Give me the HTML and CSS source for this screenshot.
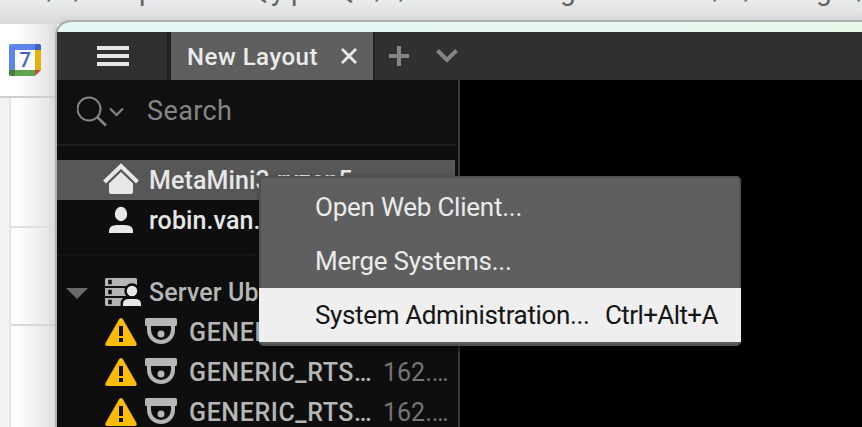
FILE: index.html
```html
<!DOCTYPE html>
<html lang="en">
<head>
<meta charset="utf-8">
<title>New Layout</title>
<link rel="stylesheet" href="styles.css">
</head>
<body>
<svg class="defs" width="0" height="0">
  <symbol id="warning" viewBox="0 0 32 28"><path d="M14.2 1Q16-1 17.8 1L31.5 25Q32.3 28 30 28H2Q-.3 28 .5 25Z" fill="#fdbc05"/><path d="M14 8h4v10h-4zM14 20h4v4h-4z" fill="#0e0e0e"/></symbol>
  <symbol id="camera" viewBox="0 0 32 26"><path d="M1.5 0h29Q32 0 32 1.5V6.500Q32 8 30.500 8H30v4a14 14 0 0 1-28 0V8h-.5Q0 8 0 6.500v-5Q0 0 1.500 0ZM6 8v3.500a10 10.500 0 0 0 20 0V8Z" fill="#b6b6b6" fill-rule="evenodd"/><circle cx="16" cy="16" r="3.500" fill="#b6b6b6"/></symbol>
</svg>
<div class="address"><svg width="862" height="24"><text y="0" x="47 74 139 249 271 291 335 375 399 560 713 744 816 857">//pQypQ//g//g/</text></svg></div>
<div class="page">
  <div class="page-head">
    <svg width="32" height="32" viewBox="0 0 32 32"><path d="M2 0h24v6H6v20H0V2Q0 0 2 0Z" fill="#5b84ec"/><path d="M26 0h4q2 0 2 2v4h-6Z" fill="#3c64c4"/><path d="M26 6h6v20h-6Z" fill="#e4b20c"/><path d="M6 26h20v6H6Z" fill="#60a350"/><path d="M0 26h6v6H2Q0 32 0 30Z" fill="#477d37"/><path d="M26 26h6l-6 6Z" fill="#cf4632"/><path d="M6 6h20v20H6Z" fill="#fbfbfb"/><text class="day" x="10.500" y="23">7</text></svg>
  </div>
  <div class="page-grid"><div class="gutter"></div><div class="slots"><div class="slot first"></div><div class="slot"></div></div></div>
</div>

<div class="window">
  <div class="titlebar"></div>
  <div class="tabs">
    <div class="menu-button"><svg width="32" height="20"><path d="M0 0h32v4H0zM0 8h32v4H0zM0 16h32v4H0z" fill="#e6e6e6"/></svg></div>
    <div class="tab"><span>New Layout</span><svg width="16" height="16"><path d="M1 1l14 14M15 1L1 15" stroke="#ebebeb" stroke-width="2.800"/></svg></div>
    <svg class="add" width="20" height="20"><path d="M8 0h4v8h8v4h-8v8H8v-8H0V8h8z" fill="#858585"/></svg>
    <svg class="more" width="22" height="14"><path d="M1.500 1.500L11 11l9.500-9.500" fill="none" stroke="#858585" stroke-width="4"/></svg>
  </div>
  <div class="main">
    <div class="sidebar">
      <div class="search">
        <svg width="50" height="32"><circle cx="12" cy="13" r="11.500" fill="none" stroke="#858585" stroke-width="2"/><path d="M20 21l9 8.500" stroke="#858585" stroke-width="2.600"/><path d="M33 12.500l6.500 6.500L46 12.500" fill="none" stroke="#858585" stroke-width="2.200"/></svg>
        <span>Search</span>
      </div>
      <div class="tree">
        <div class="row selected">
          <svg width="36" height="32"><path d="M1.500 19L18 3l16.500 16" fill="none" stroke="#e7e7e7" stroke-width="4"/><path d="M18 9l12 11.500V29q0 2-2 2H8q-2 0-2-2v-8.500Z" fill="#e7e7e7"/></svg>
          <span>MetaMini3.ryzen5</span>
        </div>
        <div class="row user">
          <svg width="36" height="28"><ellipse cx="18" cy="8" rx="6.200" ry="7.200" fill="#e7e7e7"/><path d="M6 27v-2q0-6 8-6h8q8 0 8 6v2Z" fill="#e7e7e7"/></svg>
          <span>robin.van.</span>
        </div>
        <div class="divider"></div>
        <div class="row server">
          <svg class="arrow" width="22" height="11"><path d="M0 0h22L11 11z" fill="#696969"/></svg>
          <svg width="36" height="28"><path d="M1 0h30l1 1v7H0V1zM0 10h32v8H0zM0 20h32v8H1l-1-1z" fill="#b6b6b6"/><path d="M4 2.500h2v3H4zM4 12.500h2v3H4zM4 22.500h2v3H4z" stroke="#0e0e0e" stroke-width="1.500"/><g fill="#e7e7e7" stroke="#0e0e0e" stroke-width="5" paint-order="stroke"><circle cx="27" cy="13" r="5.200"/><path d="M18 28v-2q0-5 6-5h6q6 0 6 5v2Z"/></g></svg>
          <span>Server Ub</span>
        </div>
        <div class="row device"><svg width="32" height="28"><use href="#warning"/></svg><svg class="cam" width="32" height="26"><use href="#camera"/></svg><span>GENER</span></div>
        <div class="row device"><svg width="32" height="28"><use href="#warning"/></svg><svg class="cam" width="32" height="26"><use href="#camera"/></svg><span>GENERIC_RTS…</span><small>162.…</small></div>
        <div class="row device"><svg width="32" height="28"><use href="#warning"/></svg><svg class="cam" width="32" height="26"><use href="#camera"/></svg><span>GENERIC_RTS…</span><small>162.…</small></div>
      </div>
    </div>
    <div class="viewer"></div>
  </div>
</div>

<div class="context-menu">
  <div class="item"><span class="open">Open Web Client...</span></div>
  <div class="item"><span class="merge">Merge Systems...</span></div>
  <div class="item active"><span class="admin">System Administration...</span><span class="key">Ctrl+Alt+A</span></div>
</div>
</body>
</html>
```
FILE: styles.css
```css
* { box-sizing: border-box; }
body { margin: 0; width: 862px; height: 427px; overflow: hidden; position: relative; display: flex; flex-direction: column; font: 26px/40px Roboto, sans-serif; background: #fff; }
svg { display: block; flex: none; }
.defs { position: absolute; }
.address { height: 24px; flex: none; background: linear-gradient(#eaecec, #d9dadc); }
.address text { font: 28px Roboto, sans-serif; fill: #606266; }
.page { width: 57px; flex: 1; display: flex; flex-direction: column; background: linear-gradient(90deg, #fff 25%, #f0f0f0 65%, #dedede); }
.page-head { height: 74px; flex: none; border-bottom: 2px solid #cfcfd1; padding: 20px 0 0 9px; }
.day { font: 500 20px Roboto, sans-serif; fill: #3c64c4; }
.page-grid { display: flex; flex: 1; }
.gutter { width: 11px; border-right: 2px solid #e3e4e8; background: #f3f3f3; }
.slots { flex: 1; }
.slot { height: 98px; border-bottom: 2px solid #d6d7dc; }
.slot.first { height: 130px; border-color: #dce0e6; }

.window { position: absolute; left: 55px; top: 20px; width: 815px; height: 415px; display: flex; flex-direction: column; border: 2px solid #afb1b1; border-radius: 15px 0 0 0; overflow: hidden; background: #000; box-shadow: -1px 0 8px rgba(0, 0, 0, .06); }
.titlebar { height: 10px; flex: none; background: linear-gradient(90deg, #e4f7f5 30%, #e9f6ea); }
.tabs { height: 48px; flex: none; display: flex; align-items: center; background: #303030; }
.menu-button { width: 114px; height: 48px; border-right: 4px solid #222; padding: 14px 0 0 40px; }
.tab { width: 204px; height: 48px; display: flex; align-items: center; background: #5f5f5f; border-right: 2px solid #222; color: #ebebeb; font-size: 24px; font-weight: 500; letter-spacing: .5px; line-height: 48px; padding-left: 16px; }
.tab span { width: 154px; white-space: nowrap; padding-top: 1px; }
.add { margin-left: 14px; }
.more { margin-left: 27px; }
.main { flex: 1; display: flex; }
.sidebar { width: 403px; border-right: 2px solid #373737; background: #0e0e0e; padding-right: 3px; }
.search { height: 66px; border-bottom: 2px solid #1e1e1e; background: #101010; display: flex; color: #858585; padding: 11px 0 0 20px; }
.search svg { margin-top: 5px; }
.search span { margin-left: 20px; font-size: 27px; letter-spacing: .4px; }
.tree { padding-top: 14px; color: #b6b6b6; font-weight: 500; }
.row { height: 40px; display: flex; align-items: center; padding-left: 46px; white-space: nowrap; }
.row span { margin: 2px 0 0 10px; font-size: 25px; letter-spacing: .1px; }
.selected { background: #575757; color: #e7e7e7; }
.selected svg { margin-bottom: 2px; }
.user { color: #e7e7e7; }
.user svg { margin-bottom: 1px; }
.divider { height: 32px; padding-top: 14px; }
.divider::before { content: ""; display: block; height: 2px; background: #151515; }
.server { padding-left: 9px; }
.arrow { margin: 2px 17px 0 0; }
.server span { margin-left: 8px; }
.device { padding-left: 48px; }
.cam { margin: 0 0 2px 8px; }
.row.device span { width: 194px; margin-left: 12px; letter-spacing: .6px; }
.device small { margin-top: 2px; font-size: 25px; font-weight: 400; color: #757575; }
.viewer { flex: 1; background: #000; }

.context-menu { position: absolute; left: 259px; top: 176px; width: 482px; height: 170px; padding-top: 4px; border-radius: 5px; background: #5f5f5f; box-shadow: inset 0 0 0 2px #505050, 2px 3px 6px rgba(0, 0, 0, .5); color: #ebebeb; }
.item { height: 54px; line-height: 54px; display: flex; padding-left: 56px; white-space: nowrap; }
.active { background: #efefef; color: #151515; }
.open { letter-spacing: -.24px; }
.merge { letter-spacing: -.22px; }
.admin { width: 290px; letter-spacing: -.36px; }
.key { letter-spacing: -.6px; }
```
